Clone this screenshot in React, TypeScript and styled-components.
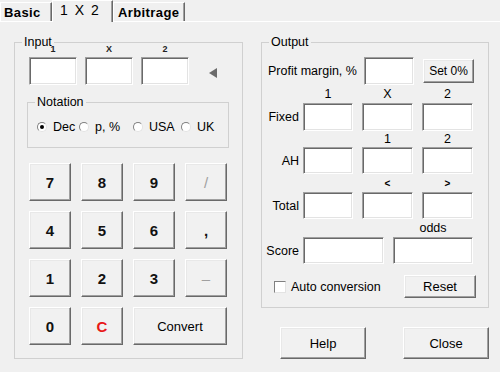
import styled, { createGlobalStyle } from "styled-components";

const GlobalStyle = createGlobalStyle`
  body {
    margin: 0;
    background: #f0f0f0;
    font-family: "Liberation Sans", Arial, sans-serif;
    font-size: 12.5px;
    color: #000;
  }
`;

const Window = styled.div`
  width: 500px;
  height: 372px;
  background: #f0f0f0;
  overflow: hidden;
`;

const TabBar = styled.div`
  display: flex;
  align-items: flex-end;
  height: 21px;
  position: relative;
  z-index: 1;
`;

const Tab = styled.div<{ $active?: boolean; $w: number; $pad: number }>`
  box-sizing: border-box;
  width: ${(p) => p.$w}px;
  height: ${(p) => (p.$active ? 22 : 19)}px;
  margin-bottom: ${(p) => (p.$active ? -1 : 0)}px;
  padding-left: ${(p) => p.$pad}px;
  display: flex;
  align-items: center;
  background: #f0f0f0;
  border-top: 1px solid #fff;
  border-left: 1px solid #fff;
  border-right: 1px solid #696969;
  box-shadow: inset -1px 0 #a0a0a0;
  font-size: ${(p) => (p.$active ? 14 : 13)}px;
  font-weight: ${(p) => (p.$active ? 400 : 700)};
  letter-spacing: ${(p) => (p.$active ? 0 : 0.4)}px;
  word-spacing: ${(p) => (p.$active ? 3 : 0)}px;
  padding-bottom: ${(p) => (p.$active ? 3 : 0)}px;
`;

const Panel = styled.div`
  border-top: 1px solid #fff;
  display: flex;
  align-items: flex-start;
  gap: 18px;
  padding: 14px 0 0 14px;
`;

const Group = styled.fieldset<{ $w?: number }>`
  box-sizing: border-box;
  margin: 0;
  padding: 0;
  min-inline-size: 0;
  ${(p) => (p.$w ? `width: ${p.$w}px;` : "")}
  border: 1px solid #d0d0d0;
`;

const Legend = styled.legend`
  margin-left: 7px;
  padding: 0 2px;
  line-height: 12px;
  font-size: 12.5px;
`;

const InputGroup = styled(Group)`
  padding-bottom: 13px;
`;

const InputRow = styled.div`
  display: flex;
  align-items: flex-end;
  gap: 8px;
  padding-left: 14px;
  margin-top: -3px;
`;

const InputCell = styled.div`
  display: flex;
  flex-direction: column;
  align-items: center;
  gap: 3px;
`;

const TinyLabel = styled.span`
  font-size: 9px;
  font-weight: 700;
  line-height: 9px;
  color: #222;
`;

const Field = styled.div<{ $w: number; $h?: number }>`
  box-sizing: border-box;
  width: ${(p) => p.$w}px;
  height: ${(p) => p.$h ?? 28}px;
  background: #fff;
  border: 1px solid;
  border-color: #a0a0a0 #fff #fff #a0a0a0;
  box-shadow: inset 1px 1px #696969, inset -1px -1px #e3e3e3;
`;

const Arrow = styled.svg`
  margin: 0 0 7px 12px;
`;

const NotationGroup = styled(Group)`
  margin: 11px 13px 0 12px;
`;

const RadioRow = styled.div`
  display: flex;
  align-items: center;
  height: 14px;
  margin-top: 12px;
  padding: 0 0 13px 9px;
`;

const RadioItem = styled.label<{ $w?: number }>`
  display: flex;
  align-items: center;
  gap: 6px;
  ${(p) => (p.$w ? `width: ${p.$w}px;` : "")}
  white-space: nowrap;
`;

const RadioDot = styled.span<{ $on?: boolean }>`
  box-sizing: border-box;
  width: 10px;
  height: 10px;
  border-radius: 50%;
  background: #fff;
  border: 1px solid;
  border-color: #808080 #e3e3e3 #e3e3e3 #808080;
  display: flex;
  align-items: center;
  justify-content: center;

  &::after {
    content: "";
    width: 4px;
    height: 4px;
    border-radius: 50%;
    background: ${(p) => (p.$on ? "#000" : "transparent")};
  }
`;

const Keypad = styled.div`
  display: grid;
  grid-template-columns: repeat(4, 42px);
  grid-auto-rows: 38px;
  gap: 10px;
  margin: 15px 0 0 14px;
`;

const Btn = styled.button<{ $w?: number; $h?: number; $span?: number }>`
  box-sizing: border-box;
  ${(p) => (p.$w ? `width: ${p.$w}px;` : "")}
  ${(p) => (p.$h ? `height: ${p.$h}px;` : "")}
  ${(p) => (p.$span ? `grid-column: span ${p.$span};` : "")}
  padding: 0;
  margin: 0;
  background: #f1f1f1;
  border: 1px solid;
  border-color: #fff #696969 #696969 #fff;
  box-shadow: inset -1px -1px #a0a0a0, inset 1px 1px #e8e8e8;
  font-family: "Liberation Sans", Arial, sans-serif;
  font-size: 13px;
  color: #000;
`;

const KeyBtn = styled(Btn)<{ $tone?: "red" | "dim" }>`
  font-size: 15px;
  font-weight: ${(p) => (p.$tone === "dim" ? 400 : 700)};
  color: ${(p) =>
    p.$tone === "red" ? "#e81818" : p.$tone === "dim" ? "#a0a0a0" : "#111"};
`;

const RightColumn = styled.div`
  width: 228px;
  display: flex;
  flex-direction: column;
`;

const OutputGroup = styled(Group)`
  padding-bottom: 9px;
`;

const ProfitRow = styled.div`
  display: flex;
  align-items: center;
  margin-top: 9px;
  padding-left: 6px;
`;

const ProfitLabel = styled.span`
  width: 96px;
`;

const Row = styled.div<{ $h?: number }>`
  display: flex;
  align-items: center;
  ${(p) => (p.$h ? `height: ${p.$h}px;` : "")}
`;

const RowLabel = styled.span`
  width: 37px;
  text-align: right;
`;

const Cells = styled.div`
  display: flex;
  gap: 9px;
  margin-left: 4px;
`;

const ColHead = styled.span<{ $w: number; $bold?: boolean }>`
  width: ${(p) => p.$w}px;
  text-align: center;
  font-size: ${(p) => (p.$bold ? 10 : 12.5)}px;
  font-weight: ${(p) => (p.$bold ? 700 : 400)};
`;

const AutoRow = styled.div`
  display: flex;
  align-items: center;
  height: 23px;
  margin-top: 11px;
  padding-left: 12px;
`;

const CheckBox = styled.span`
  box-sizing: border-box;
  width: 12px;
  height: 12px;
  margin-right: 5px;
  background: #fff;
  border: 1px solid;
  border-color: #808080 #e3e3e3 #e3e3e3 #808080;
`;

const ResetBtn = styled(Btn)`
  margin: 0 12px 0 auto;
`;

const SetBtn = styled(Btn)`
  margin-left: 9px;
  font-size: 12px;
`;

const BottomButtons = styled.div`
  display: flex;
  justify-content: space-between;
  margin-top: 19px;
  padding-left: 19px;
`;

const App = () => {
  const keys: { t: string; tone?: "red" | "dim" }[] = [
    { t: "7" },
    { t: "8" },
    { t: "9" },
    { t: "/", tone: "dim" },
    { t: "4" },
    { t: "5" },
    { t: "6" },
    { t: "," },
    { t: "1" },
    { t: "2" },
    { t: "3" },
    { t: "–", tone: "dim" },
    { t: "0" },
    { t: "C", tone: "red" },
  ];

  return (
    <Window>
      <GlobalStyle />
      <TabBar>
        <Tab $w={52} $pad={3}>
          Basic
        </Tab>
        <Tab $active $w={61} $pad={7}>
          1 X 2
        </Tab>
        <Tab $w={72} $pad={4}>
          Arbitrage
        </Tab>
      </TabBar>

      <Panel>
        <InputGroup $w={229}>
          <Legend>Input</Legend>
          <InputRow>
            {["1", "X", "2"].map((l) => (
              <InputCell key={l}>
                <TinyLabel>{l}</TinyLabel>
                <Field $w={48} />
              </InputCell>
            ))}
            <Arrow width="8" height="10" viewBox="0 0 8 10">
              <polygon points="8,0 8,10 0,5" fill="#6b6b6b" />
            </Arrow>
          </InputRow>

          <NotationGroup>
            <Legend>Notation</Legend>
            <RadioRow>
              <RadioItem $w={42}>
                <RadioDot $on />
                Dec
              </RadioItem>
              <RadioItem $w={54}>
                <RadioDot />
                p, %
              </RadioItem>
              <RadioItem $w={48}>
                <RadioDot />
                USA
              </RadioItem>
              <RadioItem>
                <RadioDot />
                UK
              </RadioItem>
            </RadioRow>
          </NotationGroup>

          <Keypad>
            {keys.map((k) => (
              <KeyBtn key={k.t} $tone={k.tone}>
                {k.t}
              </KeyBtn>
            ))}
            <Btn $span={2}>Convert</Btn>
          </Keypad>
        </InputGroup>

        <RightColumn>
          <OutputGroup>
            <Legend>Output</Legend>
            <ProfitRow>
              <ProfitLabel>Profit margin, %</ProfitLabel>
              <Field $w={50} />
              <SetBtn $w={51} $h={24}>
                Set 0%
              </SetBtn>
            </ProfitRow>

            <Row $h={18}>
              <RowLabel />
              <Cells>
                <ColHead $w={50}>1</ColHead>
                <ColHead $w={51}>X</ColHead>
                <ColHead $w={51}>2</ColHead>
              </Cells>
            </Row>
            <Row>
              <RowLabel>Fixed</RowLabel>
              <Cells>
                <Field $w={50} />
                <Field $w={51} />
                <Field $w={51} />
              </Cells>
            </Row>

            <Row $h={16}>
              <RowLabel />
              <Cells>
                <ColHead $w={50} />
                <ColHead $w={51}>1</ColHead>
                <ColHead $w={51}>2</ColHead>
              </Cells>
            </Row>
            <Row>
              <RowLabel>AH</RowLabel>
              <Cells>
                <Field $w={50} $h={27} />
                <Field $w={51} $h={27} />
                <Field $w={51} $h={27} />
              </Cells>
            </Row>

            <Row $h={18}>
              <RowLabel />
              <Cells>
                <ColHead $w={50} />
                <ColHead $w={51} $bold>
                  &lt;
                </ColHead>
                <ColHead $w={51} $bold>
                  &gt;
                </ColHead>
              </Cells>
            </Row>
            <Row>
              <RowLabel>Total</RowLabel>
              <Cells>
                <Field $w={50} $h={27} />
                <Field $w={51} $h={27} />
                <Field $w={51} $h={27} />
              </Cells>
            </Row>

            <Row $h={18}>
              <RowLabel />
              <Cells>
                <ColHead $w={81} />
                <ColHead $w={80}>odds</ColHead>
              </Cells>
            </Row>
            <Row>
              <RowLabel>Score</RowLabel>
              <Cells>
                <Field $w={81} $h={27} />
                <Field $w={80} $h={27} />
              </Cells>
            </Row>

            <AutoRow>
              <CheckBox />
              Auto conversion
              <ResetBtn $w={72} $h={23}>
                Reset
              </ResetBtn>
            </AutoRow>
          </OutputGroup>

          <BottomButtons>
            <Btn $w={86} $h={32}>
              Help
            </Btn>
            <Btn $w={86} $h={32}>
              Close
            </Btn>
          </BottomButtons>
        </RightColumn>
      </Panel>
    </Window>
  );
};

export default App;
